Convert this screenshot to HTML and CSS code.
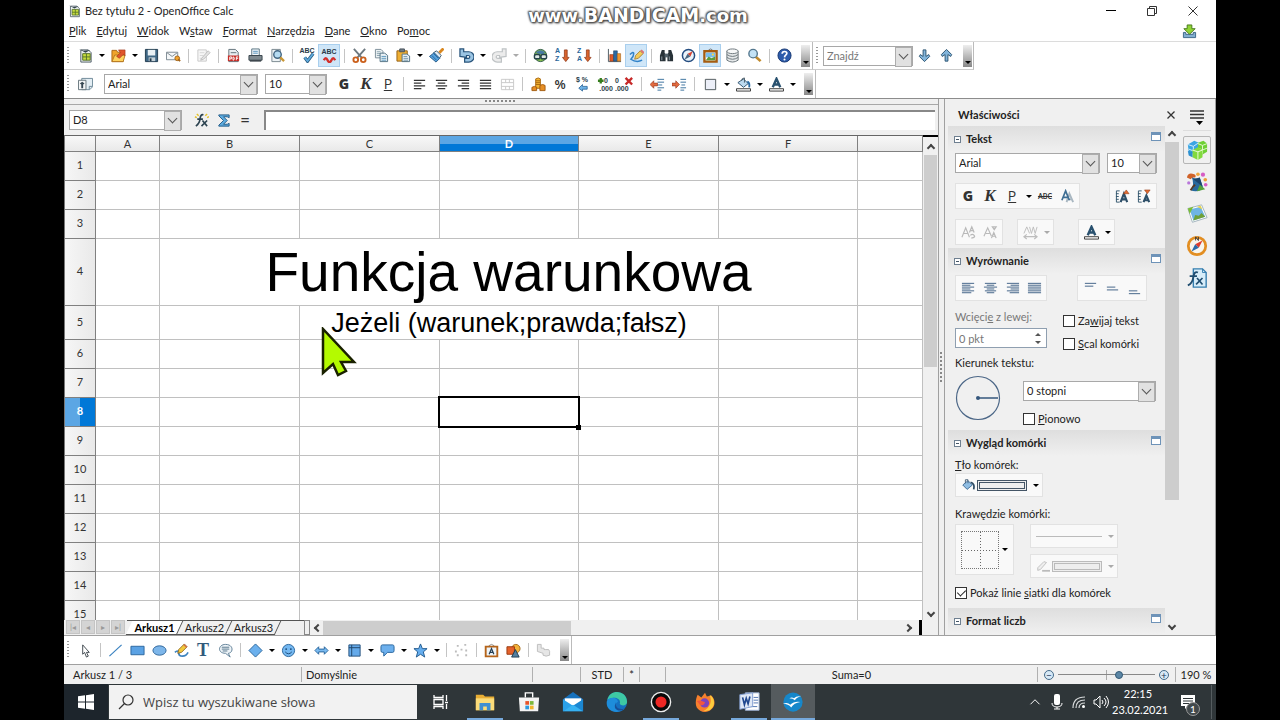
FILE: index.html
```
<!DOCTYPE html>
<html lang="pl">
<head>
    <meta charset="UTF-8">
    <meta name="viewport" content="width=device-width, initial-scale=1.0">
    <title>Bez tytułu 2 - OpenOffice Calc</title>
    <link rel="stylesheet" href="styles.css">
</head>
<body>
    <!-- Icon set -->
    <svg class="sprite" aria-hidden="true">
        <symbol id="i-new" viewBox="0 0 16 16"><path d="M3 2h8l3 3v10H3z" fill="#eef2f4" stroke="#4b5a63"/><path d="M1 1l5 2 7-1-5 3z" fill="#33434d"/><path d="M5 6h8v7H5z" fill="#c6dc3c" stroke="#54702a"/><path d="M5 9.500h8M9 6v7" stroke="#54702a"/></symbol>
        <symbol id="i-open" viewBox="0 0 16 16"><path d="M1 2.500h5l1 2h6v10H1z" fill="#f0a42c" stroke="#a8661a"/><path d="M1 14.500l3-7h11l-2 7z" fill="#ffd25e" stroke="#b57720"/><path d="M6 9l4-4-2-3h7v6l-2-1-4 4z" fill="#e0552a" stroke="#9c2f14" stroke-width=".6"/></symbol>
        <symbol id="i-save" viewBox="0 0 16 16"><path d="M1.500 1.500h13v13h-13z" fill="#3f6785" stroke="#1f3a4e"/><path d="M4 2h8v6H4z" fill="#e9f0f4"/><path d="M5 10h7v4H5z" fill="#c7d3da"/><path d="M6 11h2v3H6z" fill="#22384a"/></symbol>
        <symbol id="i-mail" viewBox="0 0 16 16"><path d="M.5 4.500h12v8H.5z" fill="#f5f7f8" stroke="#7b8890"/><path d="M1 5l5.500 4L12 5" fill="none" stroke="#7b8890"/><circle cx="12" cy="11" r="2.500" fill="#f2a32c" stroke="#a3651c"/><path d="M13 12l2 2" stroke="#a3651c" stroke-width="2"/></symbol>
        <symbol id="i-edit" viewBox="0 0 16 16"><path d="M2 2h9v12H2z" fill="#f6f6f6" stroke="#c9c9c9"/><path d="M4 5h5M4 8h4M4 11h3" stroke="#d6d6d6"/><path d="M6 11l7-8 2 2-7 7-3 1z" fill="#e4e4e4" stroke="#bdbdbd"/></symbol>
        <symbol id="i-pdf" viewBox="0 0 16 16"><path d="M3 1.500h7l3 3v10H3z" fill="#e9eff2" stroke="#5f7079"/><path d="M5 5h6" stroke="#5f7079"/><path d="M2 8h12v6H2z" fill="#c72d27"/><path d="M4 13V9.500h2v2H4M7.500 13V9.500c2 0 2 3.500 0 3.500M11 13V9.500h2M11 11h2" fill="none" stroke="#fff"/></symbol>
        <symbol id="i-print" viewBox="0 0 16 16"><path d="M4 1h8v7H4z" fill="#f3f8fb" stroke="#54707f"/><path d="M5.500 3.500h5M5.500 5.500h5" stroke="#4c8bb5"/><path d="M1 8h14v5H1z" fill="#7e898f" stroke="#36424a"/><path d="M2 13h12v1.500H2z" fill="#323c43"/></symbol>
        <symbol id="i-preview" viewBox="0 0 16 16"><path d="M2 1.500h9v13H2z" fill="#eef3f5" stroke="#77868e"/><circle cx="8" cy="7" r="4" fill="#b5dbf1" stroke="#426682" stroke-width="1.500"/><path d="M11 10l4 4" stroke="#c99735" stroke-width="2.500"/></symbol>
        <symbol id="i-check" viewBox="0 0 16 16"><path d="M5 10l3 4 6-8" fill="none" stroke="#24557b" stroke-width="3.500"/><path d="M5 10l3 4 6-8" fill="none" stroke="#60abdc" stroke-width="1.800"/></symbol>
        <symbol id="i-wave" viewBox="0 0 16 16"><path d="M2 13q2-4 4 0t4 0 4 0" fill="none" stroke="#d42e2a" stroke-width="2.600"/></symbol>
        <symbol id="i-cut" viewBox="0 0 16 16"><path d="M2 1l9 10M14 1L5 11" stroke="#6d7980" stroke-width="2"/><circle cx="4" cy="12.500" r="2.500" fill="none" stroke="#cb611d" stroke-width="2"/><circle cx="12" cy="12.500" r="2.500" fill="none" stroke="#cb611d" stroke-width="2"/></symbol>
        <symbol id="i-copy" viewBox="0 0 16 16"><path d="M1.500 1.500h6l2 2v7h-8z" fill="#eef3f5" stroke="#7a8c96"/><path d="M3 4h4M3 6h4M3 8h4" stroke="#8aa2ae"/><path d="M6.500 5.500h5l3 2.500v6.500h-8z" fill="#e9f1f5" stroke="#4f6f81"/><path d="M8 9h5M8 11h5M8 13h5" stroke="#5c97bd"/></symbol>
        <symbol id="i-paste" viewBox="0 0 16 16"><path d="M1 3h11v11H1z" fill="#efaf33" stroke="#946015"/><path d="M4 1h5v3H4z" fill="#707d86" stroke="#46525a"/><path d="M6.500 6.500h5l3 2v6h-8z" fill="#edf3f6" stroke="#4f6f81"/><path d="M8 9h4M8 11h5M8 13h5" stroke="#7093a7"/></symbol>
        <symbol id="i-brush" viewBox="0 0 16 16"><path d="M15.500.5L11 5" stroke="#d9871f" stroke-width="3"/><path d="M8 3l5 5-2 3-6-6z" fill="#e3ecf2" stroke="#37566e"/><path d="M5.500 5l6 6-4 4-7-6z" fill="#57a2dd" stroke="#245a88"/><path d="M3 8l5 5M5 6l5 5" stroke="#2b679b"/></symbol>
        <symbol id="i-undo" viewBox="0 0 16 16"><path d="M1 1h4v3h5.500a5 5 0 0 1 0 11H6v-4h4a1.500 1.500 0 0 0 0-3H8v2L1 9z" fill="#9ac4e3" stroke="#28547b" stroke-width="1.300"/></symbol>
        <symbol id="i-redo" viewBox="0 0 16 16"><path d="M15 1h-4v3H5.500a5 5 0 0 0 0 11H10v-4H6a1.500 1.500 0 0 1 0-3h2v2l7-1z" fill="#ececec" stroke="#bfc3c5" stroke-width="1.300"/></symbol>
        <symbol id="i-link" viewBox="0 0 16 16"><circle cx="8" cy="8" r="6.500" fill="#86bd4f" stroke="#2c5942"/><path d="M3 5q5-5 10 0l-3 2-4-1z" fill="#477aa3"/><rect x="1.500" y="7" width="6" height="4.500" rx="2" fill="#dfe9e7" stroke="#25434a" stroke-width="1.500"/><rect x="8.500" y="7" width="6" height="4.500" rx="2" fill="#dfe9e7" stroke="#25434a" stroke-width="1.500"/></symbol>
        <symbol id="i-down" viewBox="0 0 16 16"><path d="M10 2h3v8h2l-3.500 4.500L8 10h2z" fill="#d9642c" stroke="#8d3516" stroke-width=".8"/></symbol>
        <symbol id="i-chart" viewBox="0 0 16 16"><path d="M1.500 1v13.500H15" fill="none" stroke="#4c5960"/><path d="M3 7h4v7H3z" fill="#dc5a28" stroke="#8e3413" stroke-width=".6"/><path d="M7 3h4v11H7z" fill="#2c69a1" stroke="#1a4069" stroke-width=".6"/><path d="M11 6h3.500v8H11z" fill="#f0972f" stroke="#9b5a14" stroke-width=".6"/></symbol>
        <symbol id="i-draw" viewBox="0 0 16 16"><path d="M1 7q4-4 4-1t-3 6q6 4 12 1" fill="none" stroke="#3182c8" stroke-width="1.600"/><path d="M6 12l1-4 5-5 3 3-5 5z" fill="#f3cb59" stroke="#997025" stroke-width=".8"/><path d="M12 3l1.500-1.500 3 3L15 6z" fill="#dd7573"/></symbol>
        <symbol id="i-find" viewBox="0 0 16 16"><path d="M3 2h3v3l1 2v7H1V8zM10 2h3l2 6v6H9V7l1-2z" fill="#283238"/><path d="M6 6h4v4H6z" fill="#52616a"/><path d="M3 9v4M11 9v4" stroke="#91a1aa"/></symbol>
        <symbol id="i-nav" viewBox="0 0 16 16"><circle cx="8" cy="8" r="6.500" fill="#eaf4fb" stroke="#254d80" stroke-width="1.600"/><path d="M12.500 3.500L10 9 7 6z" fill="#d64332"/><path d="M3.500 12.500L7 6l3 3z" fill="#4a6780"/></symbol>
        <symbol id="i-gallery" viewBox="0 0 16 16"><path d="M6 2q2-2 4 0" fill="none" stroke="#777"/><path d="M1.500 3.500h13v11h-13z" fill="#fff" stroke="#a55c10" stroke-width="2.500"/><path d="M3 5h10v5H3z" fill="#78bdec"/><path d="M3 13l3-4 3 2 4-2v4z" fill="#5d9b3b"/><circle cx="10.500" cy="7" r="1.200" fill="#ffd93b"/></symbol>
        <symbol id="i-db" viewBox="0 0 16 16"><path d="M2 3v10q6 4 12 0V3" fill="#e5e8e9" stroke="#6a747a"/><ellipse cx="8" cy="3.500" rx="6" ry="2.500" fill="#f7f8f8" stroke="#6a747a"/><path d="M2 7q6 4 12 0M2 10q6 4 12 0" fill="none" stroke="#6a747a"/></symbol>
        <symbol id="i-zoom" viewBox="0 0 16 16"><path d="M9 9l5.500 5" stroke="#c18a2c" stroke-width="2.800"/><circle cx="6.500" cy="6" r="4.500" fill="#c3e2f5" stroke="#55788f" stroke-width="1.500"/></symbol>
        <symbol id="i-help" viewBox="0 0 16 16"><circle cx="8" cy="8" r="7" fill="#2d5cab" stroke="#183871"/><path d="M5.500 6.200q0-2.500 2.500-2.500t2.500 2q0 1-1.200 1.900T8 10" fill="none" stroke="#fff" stroke-width="1.800"/><circle cx="8" cy="12.300" r="1.100" fill="#fff"/></symbol>
        <symbol id="i-arrow-down" viewBox="0 0 16 16"><path d="M6.500 2h3v7l3-2 1 2L8 14.500 2.500 9l1-2 3 2z" fill="#83b5db" stroke="#29516f"/></symbol>
        <symbol id="i-arrow-up" viewBox="0 0 16 16"><path d="M6.500 14h3V7l3 2 1-2L8 1.500 2.500 7l1 2 3-2z" fill="#83b5db" stroke="#29516f"/></symbol>
        <symbol id="i-styles" viewBox="0 0 16 16"><path d="M4 1.500h11.500v9l-3 3H4z" fill="#e4eef4" stroke="#6d8797"/><path d="M12 13v-3h3" fill="none" stroke="#6d8797"/><path d="M.5 3.500h8v10h-8z" fill="#f3f5f6" stroke="#63727a"/><path d="M4.500 5l2.500 2-1.500 1v4h-2V8L2 7z" fill="#364752"/></symbol>
        <symbol id="i-left" viewBox="0 0 16 16"><path d="M2 3.500h12M2 6.500h8M2 9.500h12M2 12.500h8" stroke="currentColor" stroke-width="1.300"/></symbol>
        <symbol id="i-center" viewBox="0 0 16 16"><path d="M2 3.500h12M4 6.500h8M2 9.500h12M4 12.500h8" stroke="currentColor" stroke-width="1.300"/></symbol>
        <symbol id="i-right" viewBox="0 0 16 16"><path d="M2 3.500h12M6 6.500h8M2 9.500h12M6 12.500h8" stroke="currentColor" stroke-width="1.300"/></symbol>
        <symbol id="i-justify" viewBox="0 0 16 16"><path d="M2 3.500h12M2 6.500h12M2 9.500h12M2 12.500h12" stroke="currentColor" stroke-width="1.300"/></symbol>
        <symbol id="i-sleft" viewBox="0 0 16 16"><path d="M1 2.500h13M1 4.500h9M1 6.500h13M1 8.500h9M1 10.500h13M1 12.500h10" stroke="currentColor"/></symbol>
        <symbol id="i-scenter" viewBox="0 0 16 16"><path d="M2 2.500h12M4 4.500h8M1 6.500h14M4 8.500h8M2 10.500h12M4 12.500h8" stroke="currentColor"/></symbol>
        <symbol id="i-sright" viewBox="0 0 16 16"><path d="M2 2.500h13M6 4.500h9M2 6.500h13M6 8.500h9M2 10.500h13M5 12.500h10" stroke="currentColor"/></symbol>
        <symbol id="i-sjustify" viewBox="0 0 16 16"><path d="M1 2.500h14M1 4.500h14M1 6.500h14M1 8.500h14M1 10.500h14M1 12.500h14" stroke="currentColor"/></symbol>
        <symbol id="i-top" viewBox="0 0 16 16"><path d="M2 2.500h12M2 5.500h9" stroke="currentColor"/></symbol>
        <symbol id="i-middle" viewBox="0 0 16 16"><path d="M2 6.500h9M2 9.500h12" stroke="currentColor"/></symbol>
        <symbol id="i-bottom" viewBox="0 0 16 16"><path d="M2 10.500h9M2 13.500h12" stroke="currentColor"/></symbol>
        <symbol id="i-merge" viewBox="0 0 16 16"><path d="M1.500 2.500h13v11h-13zM1.500 6h13M1.500 10h13M6 2.500V6M10 2.500V6M6 10v3.500M10 10v3.500" fill="none" stroke="#c9c9c9"/></symbol>
        <symbol id="i-coins" viewBox="0 0 16 16"><path d="M5 2q3-2 5 0v10H5z" fill="#f4b431" stroke="#a96912"/><path d="M5 4h5M5 6h5M5 8h5" stroke="#a96912"/><path d="M1 11q3-2 5 0v3.500H1zM9.500 9q3-2 5.500 0v5.500H9.500z" fill="#e68f25" stroke="#a35b10"/></symbol>
        <symbol id="i-back" viewBox="0 0 16 16"><path d="M13 10H8V8l-4 4 4 3v-2h5z" fill="#6db2e6" stroke="#205c91" stroke-width=".8"/></symbol>
        <symbol id="i-plus" viewBox="0 0 16 16"><path d="M4 1v6M1 4h6" stroke="#357d1d" stroke-width="2.500"/></symbol>
        <symbol id="i-cross" viewBox="0 0 16 16"><path d="M7 1l7 7M14 1L7 8" stroke="#c62828" stroke-width="2.500"/></symbol>
        <symbol id="i-outdent" viewBox="0 0 16 16"><path d="M8 2.500h7M8 5.500h7M8 8.500h5M8 11.500h7M8 14h4" stroke="#356e9c"/><path d="M0 8l4-4v2.500h4v3H4V12z" fill="#e26b3f" stroke="#8c2f17" stroke-width=".6"/></symbol>
        <symbol id="i-indent" viewBox="0 0 16 16"><path d="M9 2.500h6M9 5.500h6M10 8.500h4M9 11.500h6M9 14h4" stroke="#356e9c"/><path d="M8 8L4 4v2.500H0v3h4V12z" fill="#e26b3f" stroke="#8c2f17" stroke-width=".6"/></symbol>
        <symbol id="i-border" viewBox="0 0 16 16"><path d="M2.500 2.500h11v11h-11z" fill="#eceff8" stroke="#4c5559"/></symbol>
        <symbol id="i-fill" viewBox="0 0 16 16"><path d="M2 6l6-4 5 5-5 4z" fill="#bcdaf0" stroke="#2f526e"/><path d="M6 4q0-3 3-3v5" fill="none" stroke="#4a5c68"/><path d="M12 5q3 1 2 6" fill="none" stroke="#2b6ca5" stroke-width="2"/><path d="M.5 12.500h15v2.500H.5z" fill="#fff" stroke="#333"/></symbol>
        <symbol id="i-fontcolor" viewBox="0 0 16 16"><path d="M4 11l4-9 4 9M6 8h4" fill="none" stroke="#29516f" stroke-width="2.600"/><path d="M.5 12.500h15v2.500H.5z" fill="#fff" stroke="#333"/></symbol>
        <symbol id="i-fx" viewBox="0 0 16 16"><path d="M3 1l2 2M1 4l2 1M12 3l2-2M14 5l2-1" stroke="#e4c22b" stroke-width="1.500"/><path d="M10 2Q7 1 6.500 6T2 14M3.500 6.500h6" fill="none" stroke="#2c4350" stroke-width="1.800"/><path d="M9 8l5 6M14 8l-6 6" stroke="#2c4350" stroke-width="1.700"/></symbol>
        <symbol id="i-sum" viewBox="0 0 16 16"><path d="M14 5V2H3v1l5 5-5 5v1h11v-3l-2 1H8l4-4-4-4h4z" fill="#5dace0" stroke="#235b86"/></symbol>
        <symbol id="i-update" viewBox="0 0 16 16"><path d="M1.500 9v5.500h13V9H12v2H4V9z" fill="#82afd0" stroke="#3b6587"/><path d="M5.500 1h5v4H14l-6 6-6-6h3.500z" fill="#8fd435" stroke="#46791a"/></symbol>

        <symbol id="i-pointer" viewBox="0 0 16 16"><path d="M5 2v10l2-2 2 5 2-1-2-4h3z" fill="#fff" stroke="#3f484e"/></symbol>
        <symbol id="i-line" viewBox="0 0 16 16"><path d="M1.500 14l13-12" stroke="#3a82c0" stroke-width="1.300"/></symbol>
        <symbol id="i-rect" viewBox="0 0 16 16"><path d="M1 3.500h14v9H1z" fill="#5ba2e4" stroke="#2a659e"/></symbol>
        <symbol id="i-ellipse" viewBox="0 0 16 16"><ellipse cx="8" cy="8" rx="7" ry="5" fill="#7db6ea" stroke="#2e659a"/></symbol>
        <symbol id="i-pencil" viewBox="0 0 16 16"><path d="M1 10q3-3 4 0 0 4 4 4t6-4" fill="none" stroke="#3d83bf" stroke-width="1.800"/><path d="M4 11l1-4 6-6 3 3-6 6z" fill="#f2c93c" stroke="#7c5614" stroke-width=".8"/><path d="M10 2l1-1 3 3-1 1z" fill="#d36a4e"/></symbol>
        <symbol id="i-note" viewBox="0 0 16 16"><path d="M8 1.500c9 0 8.500 9 3 9.500l2 4-5-4C-1 11 0 1.500 8 1.500z" fill="#eef4f8" stroke="#5f7f96"/><path d="M4 4.500h8M4 6.500h8M5 8.500h5" stroke="#54748b"/></symbol>
        <symbol id="i-diamond" viewBox="0 0 16 16"><path d="M8 1l7 7-7 7-7-7z" fill="#6bb0ed" stroke="#28649c"/></symbol>
        <symbol id="i-smile" viewBox="0 0 16 16"><circle cx="8" cy="8" r="6.500" fill="#74b8f1" stroke="#28649c"/><circle cx="5.500" cy="6.500" r="1" fill="#1d4b79"/><circle cx="10.500" cy="6.500" r="1" fill="#1d4b79"/><path d="M4.500 9.500q3.500 4 7 0" fill="none" stroke="#1d4b79"/></symbol>
        <symbol id="i-arrows" viewBox="0 0 16 16"><path d="M1 8l4-4v2.500h6V4l4 4-4 4V9.500H5V12z" fill="#79baf0" stroke="#28649c"/></symbol>
        <symbol id="i-flow" viewBox="0 0 16 16"><path d="M2 2h12v12H2z" fill="#65aaea" stroke="#28527e"/><path d="M5 2v12M2 5h12" stroke="#1f4369"/></symbol>
        <symbol id="i-balloon" viewBox="0 0 16 16"><path d="M2.500 2h11q1.500 0 1.500 2v4q0 2-1.500 2H8l-4 4v-4H2.500Q1 10 1 8V4q0-2 1.500-2z" fill="#6db0ed" stroke="#28649c"/></symbol>
        <symbol id="i-star" viewBox="0 0 16 16"><path d="M8 1l2 5h5l-4 3.500 1.500 5.500L8 12l-4.500 3L5 9.500 1 6h5z" fill="#66aeef" stroke="#1f578c"/></symbol>
        <symbol id="i-points" viewBox="0 0 16 16"><path d="M3 3h2M11 2h2M7 7h2M12 8h2M1 9h2M3 13h2M12 13h2" stroke="#bcbcbc" stroke-width="2"/></symbol>
        <symbol id="i-fontwork" viewBox="0 0 16 16"><path d="M5 3q3-3 6 0" fill="none" stroke="#888"/><path d="M1.800 3.800h12.400v10.400H1.800z" fill="#eef4f8" stroke="#b5641a" stroke-width="2"/><path d="M5.500 12L8 6l2.500 6M6.500 10h3" fill="none" stroke="#223e55" stroke-width="1.300"/></symbol>
        <symbol id="i-shapes" viewBox="0 0 16 16"><circle cx="10.500" cy="6" r="4.500" fill="#f2b23a" stroke="#a66b16"/><path d="M1 4h8v8H1z" fill="#e5622b" stroke="#96390f"/><path d="M10 7l4 8H6z" fill="#55809f" stroke="#1f3b50"/></symbol>
        <symbol id="i-extrude" viewBox="0 0 16 16"><path d="M1.500 1.500h4v4h3V7h2q4-1 4 2v4q-4 2-7 0v-2l-6-2z" fill="#e6e6e6" stroke="#bdbdbd"/></symbol>

        <symbol id="i-shadow" viewBox="0 0 16 16"><path d="M7 14l3-9 4 9M8 11h5" fill="none" stroke="#a9b7c1" stroke-width="2"/><path d="M2 12l4-10 4 10M3 9h5" fill="none" stroke="#3f6f94" stroke-width="1.800"/></symbol>
        <symbol id="i-grow" viewBox="0 0 16 16"><path d="M5 2H1.500v12H5M1 5h3M1 8h3M1 11h3" fill="none" stroke="#33566e"/><path d="M6 14l3.500-9L13 14M7 11h5" fill="none" stroke="#2e4f68" stroke-width="2.300"/><path d="M9 5l3-4 3 4z" fill="#e36c32" stroke="#933b16" stroke-width=".6"/></symbol>
        <symbol id="i-shrink" viewBox="0 0 16 16"><path d="M5 2H1.500v12H5M1 5h3M1 8h3M1 11h3" fill="none" stroke="#33566e"/><path d="M7 14l3-7 3 7M8 12h4" fill="none" stroke="#2e4f68" stroke-width="2.300"/><path d="M8 1h6l-3 4z" fill="#e36c32" stroke="#933b16" stroke-width=".6"/></symbol>
        <symbol id="i-super" viewBox="0 0 16 16"><path d="M1 13L5 3l4 10M3 9h4" fill="none" stroke="#b9b9b9" stroke-width="1.200"/><path d="M9 8l2.500-6L14 8M10 6h3M10 11q2-2 4 0t-3 3" fill="none" stroke="#b9b9b9" stroke-width="1.300"/></symbol>
        <symbol id="i-sub" viewBox="0 0 16 16"><path d="M1 12L5 3l4 9M3 9h4" fill="none" stroke="#b9b9b9" stroke-width="1.200"/><path d="M9 14l2.500-6 2.500 6M10 12h3M10 2h4l-2 3z" fill="none" stroke="#b9b9b9" stroke-width="1.300"/></symbol>
        <symbol id="i-spacing" viewBox="0 0 16 16"><path d="M1 9l3-7 3 7M7 2l2 7 2-7 2 7 2-7" fill="none" stroke="#bdbdbd"/><path d="M2 12.500h12M4 10l-3 2.500L4 15M12 10l3 2.500-3 2.500" fill="none" stroke="#bdbdbd" stroke-width="1.300"/></symbol>
        <symbol id="i-bucket" viewBox="0 0 16 16"><path d="M2 8l6-5 5 5-6 5z" fill="#8fbde3" stroke="#3a6690"/><path d="M5 6V2h3v4" fill="none" stroke="#3d5870"/><path d="M11 5q5 1 3.500 8" fill="none" stroke="#2c4a63" stroke-width="2"/></symbol>
        <symbol id="i-pen" viewBox="0 0 16 16"><path d="M2 10l7-7 3 1-7 8-3 1z" fill="#eee" stroke="#bbb"/><path d="M7 13.500h9" stroke="#bbb" stroke-width="2"/></symbol>

        <symbol id="i-cubes" viewBox="0 0 24 24"><path d="M2 6l7-4 5 2v9l-4 4-7-3z" fill="#3aa5e3"/><path d="M2 6l6 2 6-4M8 8v8M3 11l5 2" fill="none" stroke="#d9f0fc"/><path d="M13 4l6-2 4 3v9l-5 3-5-2z" fill="#6fd035"/><path d="M13 5l5 2 5-2M18 7v9M13 10l5 2 5-2" fill="none" stroke="#e8fbd7"/><path d="M7 12l6-3 5 3v8l-5 3-6-3z" fill="#82d93e"/><path d="M7 12l6 2 5-2M13 14v9" fill="none" stroke="#f1ffe4"/><path d="M2 13l5 1v6l-4-2z" fill="#2b8fd0"/></symbol>
        <symbol id="i-stylist" viewBox="0 0 24 24"><path d="M6 6q4 4 9 1l4 12q-7 5-14 2 5-6 1-15z" fill="#27699d"/><path d="M8 9l7-2 3 10z" fill="#1d466c"/><path d="M15 15l6 5-9 2z" fill="#55a53a"/><path d="M5 21q2-4 5-6" fill="none" stroke="#5a3920" stroke-width="2"/><path d="M1 7q1-5 6-4t3 4H7l-2 2z" fill="#d0632a"/><circle cx="13" cy="3.500" r="2" fill="#f2a83e"/><circle cx="18.500" cy="4" r="2.300" fill="#d65cc4"/><circle cx="21" cy="9.500" r="2" fill="#ef9d37"/><circle cx="21.500" cy="15" r="2" fill="#d65cc4"/><circle cx="3" cy="13" r="1.800" fill="#b977da"/></symbol>
        <symbol id="i-image" viewBox="0 0 24 24"><path d="M2 6l15-4 6 14-16 5z" fill="#fff" stroke="#9db0ba"/><path d="M4 7l12-3 5 11-13 4z" fill="#6eb4e3"/><path d="M2 6l6-2-4 8z" fill="#7bbd35"/><path d="M8 19l2-6 4 1 3-3 4 4z" fill="#6fa138"/><path d="M16 3l2 4-6-3z" fill="#e9d44a"/></symbol>
        <symbol id="i-compass" viewBox="0 0 24 24"><circle cx="12" cy="12" r="9.500" fill="#f8f5ed" stroke="#e28e22" stroke-width="3"/><path d="M18 6l-4 8-4-4z" fill="#dd3d2e"/><path d="M6 18l4-8 4 4z" fill="#2c6aa8"/><path d="M10.500 6V2l3 4V2" fill="none" stroke="#333"/></symbol>
        <symbol id="i-function" viewBox="0 0 24 24"><path d="M8 2h10l4 4v16H8z" fill="#d7edf9" stroke="#357eaf" stroke-width="1.500"/><path d="M18 2v4h4" fill="none" stroke="#357eaf"/><path d="M13 6q-4-2-5 5T2 20M4 10h8" fill="none" stroke="#1f4d70" stroke-width="2"/><path d="M12 12l6 7M18 12l-7 7" stroke="#1f4d70" stroke-width="1.800"/></symbol>

        <symbol id="i-windows" viewBox="0 0 16 16"><path d="M0 2.300l7-1v6.200H0zM8 1.200L16 0v7.500H8zM0 8.500h7v6.200l-7-1zM8 8.500h8V16l-8-1.200z" fill="#fff"/></symbol>
        <symbol id="i-search" viewBox="0 0 16 16"><circle cx="10" cy="6" r="5" fill="none" stroke="#333" stroke-width="1.200"/><path d="M6.500 9.500L1 15" stroke="#333" stroke-width="1.200"/></symbol>
        <symbol id="i-tasks" viewBox="0 0 16 16"><path d="M1 1v2.500h9V1M1 15v-2.500h9V15M1 5.500h9v5H1zM13.500 1v6M13.500 10v5M12 8.500h3" fill="none" stroke="#fff" stroke-width="1.300"/></symbol>
        <symbol id="i-folder" viewBox="0 0 24 24"><path d="M2 4h8l2 2h10v15H2z" fill="#e9ae34"/><path d="M2 8h20v13H2z" fill="#fbdc7a"/><path d="M6 21v-8h12v8h-4v-4h-4v4z" fill="#3f8fd2"/></symbol>
        <symbol id="i-store" viewBox="0 0 24 24"><path d="M8 7V2h8v5" fill="none" stroke="#fff" stroke-width="1.500"/><path d="M1 7h22l-1 15H2z" fill="#f4f4f4"/><path d="M8 11h4v4H8z" fill="#e8552b"/><path d="M13 11h4v4h-4z" fill="#7cb83a"/><path d="M8 16h4v4H8z" fill="#2d9be2"/><path d="M13 16h4v4h-4z" fill="#f2b62b"/></symbol>
        <symbol id="i-post" viewBox="0 0 24 24"><path d="M1 9l11-8 11 8v13H1z" fill="#1671bd"/><path d="M3 8h18v8H3z" fill="#fff"/><path d="M1 9l11 7-11 6z" fill="#2ba1e9"/><path d="M23 9l-11 7 11 6z" fill="#1b87d2"/><path d="M1 22l11-7 11 7z" fill="#37b2f2"/></symbol>
        <symbol id="i-edge" viewBox="0 0 24 24"><circle cx="12" cy="12" r="11" fill="#1570c0"/><path d="M1.500 10C4-3 23-1 23 12c0 4-6 5-8 2 2-6-7-9-13.500-4z" fill="#3ec8a4"/><path d="M1 11c4-6 12-4 12 1-5 2-2 10 5 9C9 26-1 20 1 11z" fill="#1e8ddb"/><path d="M11 12c-2 6 4 9 9 7-4 5-14 2-9-7z" fill="#184f98"/></symbol>
        <symbol id="i-record" viewBox="0 0 24 24"><circle cx="12" cy="12" r="10.500" fill="#090909" stroke="#eee" stroke-width="1.500"/><circle cx="12" cy="12" r="6" fill="#ee2724"/></symbol>
        <symbol id="i-firefox" viewBox="0 0 24 24"><path d="M4 4l4 3 4-5 2 4 5-1c5 5 4 12 0 15-5 5-13 3-16-2-2-4-1-10 1-14z" fill="#f7802d"/><path d="M17 4c7 5 6 13 0 17l-7 1c8-4 10-11 7-18z" fill="#fdcc3d"/><circle cx="11.500" cy="13" r="5" fill="#7b45bc"/><path d="M3 11c5-2 6 1 9 1-1 5-6 4-7 1z" fill="#f1573f"/></symbol>
        <symbol id="i-word" viewBox="0 0 24 24"><path d="M8 2h15v19H8z" fill="#fff" stroke="#9eb4d8"/><path d="M17 7h5M17 10h5M17 13h5M12 17h9" stroke="#486fae"/><path d="M2 4l14-2v15l-14 3z" fill="#dfe8f6" stroke="#7f9bd0"/><path d="M5 7l2 8 2-7 2 6 2-8" fill="none" stroke="#21488f" stroke-width="1.800"/></symbol>
        <symbol id="i-office" viewBox="0 0 24 24"><circle cx="12" cy="12" r="10.500" fill="#1687ca"/><path d="M8 8q3-2 5 0 3-3 8-2-4 0-7 4-2-2-6-2zM1 14q5-2 8 1 4-4 11-3-7 1-10 6-3-4-9-4z" fill="#fff"/></symbol>
        <symbol id="i-up" viewBox="0 0 16 16"><path d="M2 11l6-6 6 6" fill="none" stroke="#fff" stroke-width="1.300"/></symbol>
        <symbol id="i-mic" viewBox="0 0 16 16"><rect x="5" y="0" width="6" height="11" rx="2" fill="#fff"/><path d="M3 9q0 4 5 4t5-4M8 13v2M5 15h6" fill="none" stroke="#fff"/></symbol>
        <symbol id="i-wifi" viewBox="0 0 16 16"><path d="M2 14Q2 3 14 3M5 14q0-8 9-8M8 14q0-5 6-5" fill="none" stroke="#d7dadb" stroke-width="1.200"/><circle cx="12.500" cy="12.500" r="1.500" fill="#fff"/></symbol>
        <symbol id="i-sound" viewBox="0 0 16 16"><path d="M1 6h2l4-4v12l-4-4H1z" fill="none" stroke="#fff"/><path d="M9 6q2 2 0 4M11 4q4 4 0 8M13 2q5 6 0 12" fill="none" stroke="#fff"/></symbol>
        <symbol id="i-message" viewBox="0 0 16 16"><path d="M1 1h14v11H8l-3 3v-3H1z" fill="#fff"/><path d="M3 4.500h10M3 7h10M3 9.500h6" stroke="#2d3437"/></symbol>
    </svg>

    <div class="desktop">
        <header class="titlebar">
            <svg class="app-icon"><use href="#i-new"/></svg>
            <span class="title">Bez tytułu 2 - OpenOffice Calc</span>
            <div class="watermark"><small>www.</small>BANDICAM<small>.com</small></div>
            <div class="window-buttons">
                <button title="Minimalizuj"><svg viewBox="0 0 10 10"><path d="M0 4.500h10" stroke="#000"/></svg></button>
                <button title="Przywróć"><svg viewBox="0 0 10 10"><path d="M.5 2.500h7v7h-7zM2.500 2V.5h7v7H8" fill="none" stroke="#333"/></svg></button>
                <button title="Zamknij"><svg viewBox="0 0 10 10"><path d="M.5.5l9 9M9.500.5l-9 9" stroke="#333"/></svg></button>
            </div>
        </header>

        <nav class="menubar">
            <a href="#"><u>P</u>lik</a>
            <a href="#"><u>E</u>dytuj</a>
            <a href="#"><u>W</u>idok</a>
            <a href="#">W<u>s</u>taw</a>
            <a href="#"><u>F</u>ormat</a>
            <a href="#"><u>N</u>arzędzia</a>
            <a href="#"><u>D</u>ane</a>
            <a href="#"><u>O</u>kno</a>
            <a href="#">Po<u>m</u>oc</a>
            <button class="tool update" title="Aktualizacje"><svg><use href="#i-update"/></svg></button>
        </nav>

        <div class="toolbar-row">
            <div class="toolbar">
                <i class="grip"></i>
                <button class="tool" title="Nowy"><svg><use href="#i-new"/></svg></button><button class="caret" title="Nowy: lista"></button>
                <button class="tool" title="Otwórz"><svg><use href="#i-open"/></svg></button><button class="caret" title="Otwórz: lista"></button>
                <button class="tool" title="Zapisz"><svg><use href="#i-save"/></svg></button>
                <button class="tool" title="Wyślij pocztą"><svg><use href="#i-mail"/></svg></button>
                <i class="sep"></i>
                <button class="tool" title="Edytuj plik" disabled><svg><use href="#i-edit"/></svg></button>
                <i class="sep"></i>
                <button class="tool" title="Eksportuj jako PDF"><svg><use href="#i-pdf"/></svg></button>
                <button class="tool" title="Drukuj"><svg><use href="#i-print"/></svg></button>
                <button class="tool" title="Podgląd strony"><svg><use href="#i-preview"/></svg></button>
                <i class="sep"></i>
                <button class="tool" title="Pisownia"><svg><use href="#i-check"/></svg><b class="mark">ABC</b></button>
                <button class="tool on" title="Autosprawdzanie pisowni"><svg><use href="#i-wave"/></svg><b class="mark">ABC</b></button>
                <i class="sep"></i>
                <button class="tool" title="Wytnij"><svg><use href="#i-cut"/></svg></button>
                <button class="tool" title="Kopiuj"><svg><use href="#i-copy"/></svg></button>
                <button class="tool" title="Wklej"><svg><use href="#i-paste"/></svg></button><button class="caret" title="Wklej: lista"></button>
                <button class="tool" title="Pędzel formatów"><svg><use href="#i-brush"/></svg></button>
                <i class="sep"></i>
                <button class="tool" title="Cofnij"><svg><use href="#i-undo"/></svg></button><button class="caret" title="Cofnij: lista"></button>
                <button class="tool" title="Przywróć" disabled><svg><use href="#i-redo"/></svg></button><button class="caret" title="Przywróć: lista" disabled></button>
                <i class="sep"></i>
                <button class="tool" title="Hiperłącze"><svg><use href="#i-link"/></svg></button>
                <button class="tool" title="Sortuj rosnąco"><svg><use href="#i-down"/></svg><b class="mark sort">A<br>Z</b></button>
                <button class="tool" title="Sortuj malejąco"><svg><use href="#i-down"/></svg><b class="mark sort">Z<br>A</b></button>
                <i class="sep"></i>
                <button class="tool" title="Wykres"><svg><use href="#i-chart"/></svg></button>
                <button class="tool on" title="Funkcje rysunkowe"><svg><use href="#i-draw"/></svg></button>
                <i class="sep"></i>
                <button class="tool" title="Znajdź i zamień"><svg><use href="#i-find"/></svg></button>
                <button class="tool" title="Nawigator"><svg><use href="#i-nav"/></svg></button>
                <button class="tool on" title="Galeria"><svg><use href="#i-gallery"/></svg></button>
                <button class="tool" title="Źródła danych"><svg><use href="#i-db"/></svg></button>
                <button class="tool" title="Powiększenie"><svg><use href="#i-zoom"/></svg></button>
                <i class="sep"></i>
                <button class="tool" title="Pomoc"><svg><use href="#i-help"/></svg></button>
                <button class="more" title="Więcej"></button>
            </div>
            <div class="toolbar boxed">
                <i class="grip"></i>
                <span class="combo find muted"><select aria-label="Znajdź"><option>Znajdź</option></select></span>
                <button class="tool" title="Znajdź następny"><svg><use href="#i-arrow-down"/></svg></button>
                <button class="tool" title="Znajdź poprzedni"><svg><use href="#i-arrow-up"/></svg></button>
                <button class="more" title="Więcej"></button>
            </div>
        </div>

        <div class="toolbar-row">
            <div class="toolbar format">
                <i class="grip"></i>
                <button class="tool" title="Style"><svg><use href="#i-styles"/></svg></button>
                <span class="combo font"><select aria-label="Czcionka"><option>Arial</option></select></span>
                <span class="combo size"><select aria-label="Rozmiar"><option>10</option></select></span>
                <button class="tool bold" title="Pogrubienie">G</button>
                <button class="tool italic" title="Kursywa">K</button>
                <button class="tool under" title="Podkreślenie">P</button>
                <i class="sep"></i>
                <button class="tool" title="Do lewej"><svg><use href="#i-left"/></svg></button>
                <button class="tool" title="Do środka"><svg><use href="#i-center"/></svg></button>
                <button class="tool" title="Do prawej"><svg><use href="#i-right"/></svg></button>
                <button class="tool" title="Wyjustuj"><svg><use href="#i-justify"/></svg></button>
                <button class="tool" title="Scal komórki" disabled><svg><use href="#i-merge"/></svg></button>
                <i class="sep"></i>
                <button class="tool" title="Waluta"><svg><use href="#i-coins"/></svg></button>
                <button class="tool percent" title="Procent">%</button>
                <button class="tool" title="Format standardowy"><svg><use href="#i-back"/></svg><b class="mark">$ %</b></button>
                <button class="tool" title="Dodaj miejsce dziesiętne"><svg><use href="#i-plus"/></svg><b class="mark num">0<br>.000</b></button>
                <button class="tool" title="Usuń miejsce dziesiętne"><svg><use href="#i-cross"/></svg><b class="mark num less">0<br>.000</b></button>
                <i class="sep"></i>
                <button class="tool" title="Zmniejsz wcięcie"><svg><use href="#i-outdent"/></svg></button>
                <button class="tool" title="Zwiększ wcięcie"><svg><use href="#i-indent"/></svg></button>
                <i class="sep"></i>
                <button class="tool" title="Krawędzie"><svg><use href="#i-border"/></svg></button><button class="caret" title="Krawędzie: lista"></button>
                <button class="tool" title="Kolor tła"><svg><use href="#i-fill"/></svg></button><button class="caret" title="Kolor tła: lista"></button>
                <button class="tool" title="Kolor czcionki"><svg><use href="#i-fontcolor"/></svg></button><button class="caret" title="Kolor czcionki: lista"></button>
                <button class="more" title="Więcej"></button>
            </div>
        </div>

        <main class="workspace">
            <section class="document">
                <div class="strip"><i></i></div>
                <div class="formula">
                    <span class="combo name"><select aria-label="Pole nazwy"><option>D8</option></select></span>
                    <button class="tool" title="Kreator funkcji"><svg><use href="#i-fx"/></svg></button>
                    <button class="tool" title="Suma"><svg><use href="#i-sum"/></svg></button>
                    <button class="tool equals" title="Funkcja">=</button>
                    <input type="text" aria-label="Wiersz wprowadzania">
                </div>
                <div class="sheet-area">
                    <div class="sheet-clip">
                        <table class="sheet">
                            <colgroup><col class="c-head"><col class="c-a"><col class="c-wide"><col class="c-wide"><col class="c-n"><col class="c-wide"><col class="c-n"><col></colgroup>
                            <thead><tr><th></th><th>A</th><th>B</th><th>C</th><th class="current">D</th><th>E</th><th>F</th><th></th></tr></thead>
                            <tbody>
                                <tr><th>1</th><td></td><td></td><td></td><td></td><td></td><td></td><td></td></tr>
                                <tr><th>2</th><td></td><td></td><td></td><td></td><td></td><td></td><td></td></tr>
                                <tr><th>3</th><td></td><td></td><td></td><td></td><td></td><td></td><td></td></tr>
                                <tr class="big"><th>4</th><td></td><td colspan="5">Funkcja warunkowa</td><td></td></tr>
                                <tr class="mid"><th>5</th><td></td><td></td><td colspan="3">Jeżeli (warunek;prawda;fałsz)</td><td></td><td></td></tr>
                                <tr><th>6</th><td></td><td></td><td></td><td></td><td></td><td></td><td></td></tr>
                                <tr><th>7</th><td></td><td></td><td></td><td></td><td></td><td></td><td></td></tr>
                                <tr><th class="current">8</th><td></td><td></td><td></td><td class="selected"></td><td></td><td></td><td></td></tr>
                                <tr><th>9</th><td></td><td></td><td></td><td></td><td></td><td></td><td></td></tr>
                                <tr><th>10</th><td></td><td></td><td></td><td></td><td></td><td></td><td></td></tr>
                                <tr><th>11</th><td></td><td></td><td></td><td></td><td></td><td></td><td></td></tr>
                                <tr><th>12</th><td></td><td></td><td></td><td></td><td></td><td></td><td></td></tr>
                                <tr><th>13</th><td></td><td></td><td></td><td></td><td></td><td></td><td></td></tr>
                                <tr><th>14</th><td></td><td></td><td></td><td></td><td></td><td></td><td></td></tr>
                                <tr><th>15</th><td></td><td></td><td></td><td></td><td></td><td></td><td></td></tr>
                            </tbody>
                        </table>
                        <svg class="pointer" viewBox="0 0 36 52"><path d="M2 2v44l10-9 5 11 8-4-5-9h13z" fill="#b4fa00" stroke="#1a2100" stroke-width="2.500"/></svg>
                    </div>
                    <div class="scroll main-scroll"><i class="chev up"></i><div class="track"><div class="thumb"></div></div><i class="chev down"></i></div>
                </div>
                <div class="tabs">
                    <div class="tab-nav"><button title="Pierwszy">|◂</button><button title="Poprzedni">◂</button><button title="Następny">▸</button><button title="Ostatni">▸|</button></div>
                    <div class="tab-list"><button class="tab active">Arkusz1</button><button class="tab">Arkusz2</button><button class="tab">Arkusz3</button></div>
                    <i class="splitter"></i>
                    <div class="hscroll"><i class="chev left"></i><div class="htrack"><div class="hthumb"></div></div><i class="chev right"></i></div>
                </div>
            </section>

            <div class="divider"><i></i></div>

            <aside class="sidebar">
                <div class="panel">
                    <h2>Właściwości <button class="close" title="Zamknij"><svg viewBox="0 0 8 8"><path d="M.5.5l7 7M7.500.5l-7 7" stroke="#333" stroke-width="1.300"/></svg></button></h2>
                    <div class="panel-body">
                        <div class="sections">
                            <h3><i class="minus"></i>Tekst<button class="dialog" title="Więcej opcji"></button></h3>
                            <div class="section text-section">
                                <div class="row">
                                    <span class="combo sfont"><select aria-label="Nazwa czcionki"><option>Arial</option></select></span>
                                    <span class="combo ssize"><select aria-label="Rozmiar czcionki"><option>10</option></select></span>
                                </div>
                                <div class="row">
                                    <div class="group">
                                        <button class="tool bold" title="Pogrubienie">G</button><button class="tool italic" title="Kursywa">K</button><button class="tool under" title="Podkreślenie">P</button><button class="caret" title="Podkreślenie: lista"></button><button class="tool strike" title="Przekreślenie">ABC</button><button class="tool" title="Cień"><svg><use href="#i-shadow"/></svg></button>
                                    </div>
                                    <div class="group"><button class="tool" title="Zwiększ czcionkę"><svg><use href="#i-grow"/></svg></button><button class="tool" title="Zmniejsz czcionkę"><svg><use href="#i-shrink"/></svg></button></div>
                                </div>
                                <div class="row gap-small">
                                    <div class="group"><button class="tool" title="Indeks górny" disabled><svg><use href="#i-super"/></svg></button><button class="tool" title="Indeks dolny" disabled><svg><use href="#i-sub"/></svg></button></div>
                                    <div class="group"><button class="tool" title="Odstępy" disabled><svg><use href="#i-spacing"/></svg></button><button class="caret" title="Odstępy: lista" disabled></button></div>
                                    <div class="group push"><button class="tool" title="Kolor czcionki"><svg><use href="#i-fontcolor"/></svg></button><button class="caret" title="Kolor czcionki: lista"></button></div>
                                </div>
                            </div>

                            <h3><i class="minus"></i>Wyrównanie<button class="dialog" title="Więcej opcji"></button></h3>
                            <div class="section align-section">
                                <div class="row">
                                    <div class="group blue"><button class="tool" title="Do lewej"><svg><use href="#i-sleft"/></svg></button><button class="tool" title="Do środka"><svg><use href="#i-scenter"/></svg></button><button class="tool" title="Do prawej"><svg><use href="#i-sright"/></svg></button><button class="tool" title="Wyjustuj"><svg><use href="#i-sjustify"/></svg></button></div>
                                    <div class="group blue"><button class="tool" title="Do góry"><svg><use href="#i-top"/></svg></button><button class="tool" title="Na środku"><svg><use href="#i-middle"/></svg></button><button class="tool" title="Do dołu"><svg><use href="#i-bottom"/></svg></button></div>
                                </div>
                                <div class="two">
                                    <div class="indent">
                                        <label for="indent">Wcięci<u>e</u> z lewej:</label>
                                        <span class="spin"><input id="indent" type="text" value="0 pkt" disabled></span>
                                    </div>
                                    <div class="checks">
                                        <label><input type="checkbox"> <span>Za<u>w</u>ijaj tekst</span></label>
                                        <label><input type="checkbox"> <span><u>S</u>cal komórki</span></label>
                                    </div>
                                </div>
                                <label class="line" for="angle">Kierunek tekstu:</label>
                                <div class="direction">
                                    <svg class="dial" viewBox="0 0 46 46"><circle cx="23" cy="23" r="21.500" fill="none" stroke="#4c6787" stroke-width="1.200"/><path d="M23 23h20" stroke="#35577c" stroke-width="1.500"/><circle cx="23" cy="23" r="2" fill="#35577c"/></svg>
                                    <div class="angle">
                                        <span class="combo"><select id="angle"><option>0 stopni</option></select></span>
                                        <label><input type="checkbox"> <span><u>P</u>ionowo</span></label>
                                    </div>
                                </div>
                            </div>

                            <h3><i class="minus"></i>Wygląd komórki<button class="dialog" title="Więcej opcji"></button></h3>
                            <div class="section look-section">
                                <span class="line"><u>T</u>ło komórek:</span>
                                <div class="group picker"><button title="Tło komórek"><svg><use href="#i-bucket"/></svg><i class="swatch dark"></i></button><button class="caret" title="Tło: lista"></button></div>
                                <span class="line borders-label">Krawędzie komórki:</span>
                                <div class="borders">
                                    <div class="group border-box"><button title="Krawędzie"><i class="dots"></i></button><button class="caret" title="Krawędzie: lista"></button></div>
                                    <div class="stack">
                                        <div class="group picker"><button title="Styl linii" disabled><i class="rule"></i></button><button class="caret" title="Styl: lista" disabled></button></div>
                                        <div class="group picker"><button title="Kolor linii" disabled><svg><use href="#i-pen"/></svg><i class="swatch"></i></button><button class="caret" title="Kolor: lista" disabled></button></div>
                                    </div>
                                </div>
                                <label class="gridlines"><input type="checkbox" checked> <span>Pokaż linie <u>s</u>iatki dla komórek</span></label>
                            </div>

                            <h3><i class="minus"></i>Format liczb<button class="dialog" title="Więcej opcji"></button></h3>
                        </div>
                        <div class="scroll side"><i class="chev up"></i><div class="track"><div class="thumb"></div></div><i class="chev down"></i></div>
                    </div>
                </div>
                <div class="deck">
                    <button class="burger" title="Ustawienia panelu"><svg viewBox="0 0 16 16"><path d="M1 2h14M1 5.500h14M1 9h14" stroke="#333" stroke-width="1.300"/><path d="M7 12h7l-3.500 4z"/></svg></button>
                    <button class="on" title="Właściwości"><svg><use href="#i-cubes"/></svg></button>
                    <button title="Style"><svg><use href="#i-stylist"/></svg></button>
                    <button title="Galeria"><svg><use href="#i-image"/></svg></button>
                    <button title="Nawigator"><svg><use href="#i-compass"/></svg></button>
                    <button title="Funkcje"><svg><use href="#i-function"/></svg></button>
                </div>
            </aside>
        </main>

        <div class="toolbar-row drawing">
            <div class="toolbar">
                <i class="grip"></i>
                <button class="tool" title="Wybierz"><svg><use href="#i-pointer"/></svg></button>
                <i class="sep"></i>
                <button class="tool" title="Linia"><svg><use href="#i-line"/></svg></button>
                <button class="tool" title="Prostokąt"><svg><use href="#i-rect"/></svg></button>
                <button class="tool" title="Elipsa"><svg><use href="#i-ellipse"/></svg></button>
                <button class="tool" title="Linia odręczna"><svg><use href="#i-pencil"/></svg></button>
                <button class="tool text" title="Tekst">T</button>
                <button class="tool" title="Objaśnienie"><svg><use href="#i-note"/></svg></button>
                <i class="sep"></i>
                <button class="tool" title="Kształty podstawowe"><svg><use href="#i-diamond"/></svg></button><button class="caret" title="Kształty: lista"></button>
                <button class="tool" title="Symbole"><svg><use href="#i-smile"/></svg></button><button class="caret" title="Symbole: lista"></button>
                <button class="tool" title="Strzałki"><svg><use href="#i-arrows"/></svg></button><button class="caret" title="Strzałki: lista"></button>
                <button class="tool" title="Schematy blokowe"><svg><use href="#i-flow"/></svg></button><button class="caret" title="Schematy: lista"></button>
                <button class="tool" title="Objaśnienia"><svg><use href="#i-balloon"/></svg></button><button class="caret" title="Objaśnienia: lista"></button>
                <button class="tool" title="Gwiazdy"><svg><use href="#i-star"/></svg></button><button class="caret" title="Gwiazdy: lista"></button>
                <i class="sep"></i>
                <button class="tool" title="Punkty" disabled><svg><use href="#i-points"/></svg></button>
                <i class="sep"></i>
                <button class="tool" title="Fontwork"><svg><use href="#i-fontwork"/></svg></button>
                <button class="tool" title="Z pliku"><svg><use href="#i-shapes"/></svg></button>
                <i class="sep"></i>
                <button class="tool" title="Efekty 3D" disabled><svg><use href="#i-extrude"/></svg></button>
                <button class="more" title="Więcej"></button>
            </div>
        </div>

        <footer class="statusbar">
            <span class="s-sheet">Arkusz 1 / 3</span>
            <span class="s-style">Domyślnie</span>
            <span class="s-empty"></span>
            <span class="s-mode">STD</span>
            <span class="s-mod">*</span>
            <span class="s-sign"></span>
            <span class="s-sum">Suma=0</span>
            <span class="s-zoom"><button title="Pomniejsz">−</button><input type="range" min="0" max="100" value="64" aria-label="Powiększenie"><button title="Powiększ">+</button></span>
            <span class="s-percent">190 %</span>
        </footer>

        <div class="taskbar">
            <button class="start" title="Start"><svg><use href="#i-windows"/></svg></button>
            <label class="search"><svg><use href="#i-search"/></svg><input type="text" placeholder="Wpisz tu wyszukiwane słowa" aria-label="Wyszukiwanie"></label>
            <div class="apps">
                <button class="small" title="Widok zadań"><svg><use href="#i-tasks"/></svg></button>
                <button class="open" title="Eksplorator plików"><svg><use href="#i-folder"/></svg></button>
                <button title="Microsoft Store"><svg><use href="#i-store"/></svg></button>
                <button title="Poczta"><svg><use href="#i-post"/></svg></button>
                <button title="Microsoft Edge"><svg><use href="#i-edge"/></svg></button>
                <button class="open" title="Bandicam"><svg><use href="#i-record"/></svg></button>
                <button title="Firefox"><svg><use href="#i-firefox"/></svg></button>
                <button class="open" title="Word"><svg><use href="#i-word"/></svg></button>
                <button class="open active" title="OpenOffice"><svg><use href="#i-office"/></svg></button>
            </div>
            <div class="tray">
                <button title="Pokaż ukryte ikony"><svg class="thin"><use href="#i-up"/></svg></button>
                <button title="Mikrofon"><svg><use href="#i-mic"/></svg></button>
                <button title="Sieć"><svg><use href="#i-wifi"/></svg></button>
                <button title="Głośność"><svg><use href="#i-sound"/></svg></button>
                <time>22:15<br>23.02.2021</time>
                <button class="message" title="Powiadomienia"><svg><use href="#i-message"/></svg><span class="badge">1</span></button>
            </div>
        </div>
    </div>
</body>
</html>
```

FILE: styles.css
```
* {
    box-sizing: border-box;
}
body {
    margin: 0;
    background: #000;
    color: #222;
    font-family: Lato, 'Open Sans', sans-serif;
    font-size: 11px;
    line-height: 16px;
}
button,
input,
select {
    font: inherit;
    color: inherit;
    margin: 0;
    padding: 0;
}
button {
    background: none;
    border: 0;
}
svg {
    display: block;
}
.sprite {
    position: absolute;
    width: 0;
    height: 0;
}
.desktop {
    display: flex;
    flex-direction: column;
    min-height: 100vh;
    margin: 0 5%;
    background: #fff;
}

/* Title and menu */
.titlebar {
    position: relative;
    display: flex;
    align-items: center;
    height: 21px;
    padding: 0 2px 0 4px;
}
.app-icon {
    width: 13px;
    height: 14px;
    margin-right: 4px;
}
.watermark {
    position: absolute;
    top: 3px;
    left: 0;
    right: 4px;
    text-align: center;
    font-family: 'DejaVu Sans', sans-serif;
    font-size: 19px;
    font-weight: bold;
    line-height: 24px;
    color: #fff;
    text-shadow: 0 0 2px #444, 0 0 2px #444, 1px 1px 2px #555, -1px -1px 2px #555, 1px 1px 3px #777;
}
.watermark small {
    font-size: 18px;
}
.window-buttons {
    display: flex;
    margin-left: auto;
}
.window-buttons button {
    width: 41px;
    padding: 0 15px;
}
.window-buttons svg {
    width: 10px;
    height: 10px;
}
.menubar {
    display: flex;
    align-items: center;
    gap: 10px;
    height: 21px;
    padding: 0 16px 0 5px;
    border-bottom: 1px solid #dcdcdc;
}
.menubar a {
    color: #222;
    text-decoration: none;
}
.menubar .update {
    margin-left: auto;
}

/* Toolbars */
.toolbar-row {
    display: flex;
    height: 28px;
}
.toolbar {
    display: flex;
    align-items: center;
    padding-right: 2px;
    border-right: 1px solid #bbb;
    border-bottom: 1px solid #ccc;
}
.format {
    border-bottom: 0;
}
.grip {
    width: 2px;
    height: 18px;
    margin: 0 5px 0 3px;
    background: repeating-linear-gradient(#999 0 1px, transparent 1px 3px);
}
.tool {
    position: relative;
    display: flex;
    flex: none;
    align-items: center;
    justify-content: center;
    width: 22px;
    height: 23px;
    color: #333;
}
.tool svg {
    width: 15px;
    height: 15px;
}
.tool.on {
    background: #cfe6f8;
    border: 1px solid #a9cfee;
}
.caret {
    flex: none;
    width: 11px;
    height: 20px;
}
.caret::before,
.more::before {
    content: "";
    display: block;
    width: 0;
    margin: 0 auto;
    border: solid transparent;
    border-width: 3px 3px 0;
    border-top-color: #000;
}
.caret:disabled::before {
    border-top-color: #aaa;
}
.sep {
    flex: none;
    width: 1px;
    height: 14px;
    margin: 0 3px 0 4px;
    background: #c4c4c4;
}
.format .sep {
    margin-right: 4px;
}
.more {
    width: 9px;
    height: 22px;
    margin-left: 6px;
    padding-top: 14px;
    background: linear-gradient(#eee, #888);
}
.mark {
    position: absolute;
    top: 3px;
    left: 0;
    right: 0;
    font-family: 'Liberation Sans', Arial, sans-serif;
    font-size: 7px;
    line-height: 8px;
    text-align: center;
    color: #2b3d4a;
}
.sort {
    left: 4px;
    text-align: left;
    color: #2c679b;
}
.num {
    top: 4px;
    left: 4px;
}
.num.less {
    left: 0;
    text-align: left;
}
.bold,
.under,
.percent,
.equals {
    font-family: 'Open Sans', sans-serif;
}
.bold {
    font-size: 14px;
    font-weight: 800;
}
.italic {
    font-family: 'Liberation Serif', serif;
    font-size: 17px;
    font-style: italic;
    font-weight: bold;
}
.under {
    font-size: 14px;
    text-decoration: underline;
}
.percent {
    font-size: 13px;
    font-weight: 600;
}
.text {
    font-family: 'Liberation Serif', serif;
    font-size: 18px;
    font-weight: bold;
    color: #315a7c;
}
.strike {
    font-size: 7px;
    font-weight: bold;
    text-decoration: line-through;
}

/* Drop-downs */
.combo {
    position: relative;
    display: block;
    height: 20px;
}
.combo select {
    width: 100%;
    height: 100%;
    padding-left: 3px;
    appearance: none;
    background: #fff;
    border: 1px solid #a8a8a8;
    border-radius: 0;
}
.combo::before {
    content: "";
    position: absolute;
    top: 1px;
    right: 1px;
    width: 15px;
    height: 18px;
    background: #e1e1e1;
    border: 1px solid #adadad;
    pointer-events: none;
}
.combo::after {
    content: "";
    position: absolute;
    top: 5px;
    right: 6px;
    width: 6px;
    height: 6px;
    border: solid #555;
    border-width: 0 1px 1px 0;
    transform: rotate(45deg);
    pointer-events: none;
}
.find {
    width: 90px;
}
.muted select {
    color: #777;
}
.boxed {
    padding-right: 1px;
}
.font {
    width: 154px;
    margin: 0 7px 0 8px;
}
.size {
    width: 62px;
    margin-right: 6px;
}

/* Document */
.workspace {
    display: flex;
    flex: 1;
    background: #f0f0f0;
    border-top: 1px solid #8c8c8c;
    border-bottom: 1px solid #a0a0a0;
}
.document {
    display: flex;
    flex: 1;
    flex-direction: column;
    min-width: 0;
}
.strip {
    height: 6px;
    border-bottom: 1px solid #a8a8a8;
}
.strip i {
    display: block;
    width: 32px;
    height: 2px;
    margin: 1px auto 0;
    background: repeating-linear-gradient(90deg, #888 0 2px, transparent 2px 4px);
}
.formula {
    display: flex;
    align-items: center;
    height: 30px;
    padding: 0 3px 0 5px;
}
.name {
    width: 113px;
    margin-right: 8px;
}
.formula input {
    flex: 1;
    height: 20px;
    margin-left: 8px;
    border: solid #888;
    border-width: 2px 0 0 2px;
    outline: 0;
}
.equals {
    font-size: 16px;
}
.sheet-area {
    display: flex;
    flex: 1;
}
.sheet-clip {
    position: relative;
    flex: 1;
    height: 485px;
    overflow: hidden;
    background: #fff;
    border-top: 1px solid #666;
    border-left: 1px solid #777;
}
.sheet {
    width: 100%;
    table-layout: fixed;
    border-collapse: separate;
    border-spacing: 0;
}
.c-head {
    width: 31px;
}
.c-a {
    width: 64px;
}
.c-wide {
    width: 140px;
}
.c-n {
    width: 139px;
}
.sheet th,
.sheet td {
    height: 29px;
    padding: 0;
    border: solid #c0c0c0;
    border-width: 0 1px 1px 0;
}
.sheet th {
    padding-bottom: 2px;
    font-weight: normal;
    line-height: 12px;
    color: #333;
    background: linear-gradient(90deg, #f6f6f6, #e9e9e9);
    border-color: #808080;
}
.sheet thead th {
    height: 16px;
    padding-bottom: 0;
    background: linear-gradient(#f8f8f8, #e9e9e9);
}
.sheet .big td {
    height: 67px;
    font: 55px/60px 'Liberation Sans', Arial, sans-serif;
    text-align: center;
    color: #000;
}
.sheet .mid td {
    height: 34px;
    font: 27px/30px 'Liberation Sans', Arial, sans-serif;
    text-align: center;
    color: #000;
}
.sheet thead .current {
    font-weight: bold;
    color: #fff;
    background: linear-gradient(#5ba6e4 50%, #0078d7 50%);
}
.sheet tbody .current {
    font-weight: bold;
    color: #fff;
    background: linear-gradient(90deg, #5ba6e4 50%, #0078d7 50%);
}
.selected {
    position: relative;
}
.selected::before {
    content: "";
    position: absolute;
    inset: -2px;
    border: 2px solid #000;
}
.selected::after {
    content: "";
    position: absolute;
    right: -3px;
    bottom: -4px;
    width: 5px;
    height: 5px;
    background: #000;
}
.pointer {
    position: absolute;
    top: 191px;
    left: 256px;
    width: 36px;
    height: 52px;
}

/* Scroll bars */
.scroll {
    display: flex;
    flex-direction: column;
    align-items: center;
    width: 15px;
    padding: 8px 0 4px;
    background: #f0f0f0;
}
.main-scroll {
    border-top: 2px solid #000;
}
.track {
    flex: 1;
    width: 100%;
    margin: 4px 0;
    padding: 0 1px;
}
.thumb {
    height: 47%;
    background: #cdcdcd;
}
.chev {
    flex: none;
    width: 6px;
    height: 6px;
    border: solid #444;
    border-width: 2px 0 0 2px;
}
.up {
    transform: rotate(45deg);
}
.down {
    transform: rotate(225deg);
}
.left {
    transform: rotate(-45deg);
}
.right {
    transform: rotate(135deg);
}

/* Sheet tabs */
.tabs {
    display: flex;
    height: 15px;
    background: #f0f0f0;
}
.tab-nav {
    display: flex;
    gap: 1px;
    padding: 0 2px;
}
.tab-nav button {
    width: 14px;
    height: 14px;
    font-size: 8px;
    line-height: 12px;
    color: #999;
    background: #d4d4d4;
    border: 1px solid #c4c4c4;
}
.tab-list {
    display: flex;
    width: 177px;
    padding-left: 2px;
    border-top: 1px solid #555;
}
.tab {
    position: relative;
    z-index: 0;
    width: 49px;
    height: 14px;
    line-height: 14px;
}
.tab::before {
    content: "";
    position: absolute;
    inset: 0;
    z-index: -1;
    border: solid #555;
    border-width: 0 1px 1px 0;
    transform: skewX(-25deg);
}
.tab.active {
    width: 51px;
    font-weight: bold;
    color: #000;
}
.tab.active::before {
    background: #fff;
}
.splitter {
    width: 6px;
    border: 1px solid #888;
}
.hscroll {
    display: flex;
    flex: 1;
    align-items: center;
    margin-right: 16px;
    padding: 0 8px 0 5px;
    border-right: 3px solid #000;
}
.htrack {
    flex: 1;
    height: 14px;
    margin: 0 6px 0 2px;
}
.hthumb {
    width: 43%;
    height: 100%;
    background: #cdcdcd;
}

/* Sidebar */
.divider {
    display: flex;
    align-items: center;
    width: 7px;
    border: solid #a0a0a0;
    border-width: 0 1px;
}
.divider i {
    width: 2px;
    height: 30px;
    margin-left: 1px;
    background: repeating-linear-gradient(#888 0 2px, transparent 2px 4px);
}
.sidebar {
    display: flex;
    width: 271px;
    padding: 4px 0 1px 3px;
    border-right: 1px solid #a0a0a0;
}
.panel {
    flex: 1;
}
.panel h2 {
    display: flex;
    align-items: center;
    justify-content: space-between;
    height: 23px;
    margin: 0;
    padding: 0 4px 0 10px;
    font-size: 11px;
}
.close svg {
    width: 8px;
    height: 8px;
}
.panel-body {
    display: flex;
}
.sections {
    flex: 1;
}
.sections h3 {
    display: flex;
    align-items: center;
    height: 26px;
    margin: 0;
    padding: 0 4px 0 6px;
    font-size: 11px;
    background: linear-gradient(#dedede, #f0f0f0);
}
.minus {
    width: 7px;
    height: 7px;
    margin-right: 5px;
    background: linear-gradient(#456, #456) center / 3px 1px no-repeat #fff;
    border: 1px solid #6e7f90;
}
.dialog {
    width: 10px;
    height: 9px;
    margin: 0 0 6px auto;
    background: #fff;
    border: 1px solid #6e93b8;
    border-top-width: 3px;
}
.section {
    padding: 1px 6px 0 7px;
}
.text-section {
    height: 96px;
}
.align-section {
    height: 156px;
}
.look-section {
    height: 152px;
}
.row {
    display: flex;
    justify-content: space-between;
    margin-bottom: 10px;
}
.text-section .row {
    padding-right: 2px;
}
.gap-small {
    justify-content: flex-start;
    gap: 14px;
}
.sfont {
    width: 145px;
}
.ssize {
    width: 50px;
}
.group {
    display: flex;
    align-items: center;
    height: 26px;
    padding: 0 1px;
    background: #f9f9f9;
    border: 1px solid #e2e2e2;
}
.push {
    margin-left: 10px;
}
.blue .tool {
    color: #3d5f84;
}
.align-section .row {
    margin-bottom: 8px;
    padding-right: 12px;
}
.two {
    display: flex;
    gap: 16px;
}
.indent {
    width: 92px;
    color: #777;
}
.spin {
    position: relative;
    display: block;
    margin-top: 3px;
}
.spin input {
    width: 100%;
    height: 20px;
    padding-left: 3px;
    color: #777;
    background: #fff;
    border: 1px solid #8f9fb0;
}
.spin::before,
.spin::after {
    content: "";
    position: absolute;
    right: 6px;
    border: solid transparent;
}
.spin::before {
    top: 5px;
    border-width: 0 3px 3px;
    border-bottom-color: #555;
}
.spin::after {
    bottom: 4px;
    border-width: 3px 3px 0;
    border-top-color: #555;
}
.checks label,
.angle label,
.gridlines {
    display: flex;
    align-items: center;
    gap: 3px;
}
.checks label {
    height: 23px;
}
input[type="checkbox"] {
    flex: none;
    width: 12px;
    height: 12px;
    appearance: none;
    background: #fff;
    border: 1px solid #333;
}
input[type="checkbox"]:checked::before {
    content: "";
    display: block;
    width: 4px;
    height: 7px;
    margin-left: 3px;
    border: solid #222;
    border-width: 0 1px 1px 0;
    transform: rotate(45deg);
}
.line {
    display: block;
}
.align-section .line {
    margin-bottom: 4px;
}
.direction {
    display: flex;
    gap: 22px;
}
.dial {
    width: 46px;
    height: 46px;
}
.angle {
    width: 133px;
    padding-top: 6px;
}
.angle label {
    margin-top: 10px;
}
.picker {
    justify-content: space-between;
    width: 88px;
    height: 24px;
}
.picker button:first-child {
    display: flex;
    flex: 1;
    align-items: center;
    gap: 2px;
    padding-left: 4px;
}
.picker svg {
    width: 14px;
    height: 14px;
}
.swatch {
    width: 50px;
    height: 11px;
    background: #eee;
    border: 3px double #bbb;
}
.swatch.dark {
    border-color: #456;
}
.rule {
    width: 66px;
    height: 1px;
    background: #bbb;
}
.borders-label {
    margin: 9px 0 2px;
}
.borders {
    display: flex;
    gap: 16px;
}
.border-box {
    width: 59px;
    height: 51px;
    padding: 0 0 0 5px;
}
.dots {
    display: block;
    width: 38px;
    height: 38px;
    border: 1px dotted #777;
    background: repeating-linear-gradient(#666 0 1px, transparent 1px 3px) 18px 0 / 1px 100% no-repeat,
        repeating-linear-gradient(90deg, #666 0 1px, transparent 1px 3px) 0 18px / 100% 1px no-repeat;
}
.stack {
    display: flex;
    flex-direction: column;
    gap: 6px;
}
.gridlines {
    margin-top: 7px;
}
.side {
    width: 14px;
    padding: 6px 0 5px;
}
.side .track {
    padding: 0;
}
.side .thumb {
    height: 75%;
}
.deck {
    display: flex;
    flex-direction: column;
    align-items: center;
    gap: 4px;
    width: 36px;
}
.deck button {
    display: flex;
    align-items: center;
    justify-content: center;
    width: 28px;
    height: 28px;
}
.deck .burger {
    margin-bottom: 1px;
    border-bottom: 1px solid #ddd;
}
.deck .on {
    border: 1px solid #b5b5b5;
    border-radius: 2px;
}
.deck svg {
    width: 22px;
    height: 22px;
}
.deck .burger svg {
    width: 16px;
    height: 16px;
}

/* Status bar */
.drawing .toolbar {
    border-bottom: 0;
}
.statusbar {
    display: flex;
    align-items: center;
    height: 20px;
    background: #f0f0f0;
    border-top: 1px solid #a0a0a0;
}
.statusbar > span {
    height: 15px;
    line-height: 15px;
    text-align: center;
    border-right: 1px solid #b0b0b0;
}
.statusbar .s-sheet {
    width: 238px;
    padding-left: 9px;
    text-align: left;
}
.statusbar .s-style {
    width: 231px;
    padding-left: 4px;
    text-align: left;
}
.s-empty {
    width: 48px;
}
.s-mode {
    width: 43px;
}
.s-mod {
    width: 16px;
}
.s-sign {
    width: 26px;
}
.s-sum {
    flex: 1;
}
.statusbar .s-zoom {
    display: flex;
    align-items: center;
    justify-content: center;
    gap: 4px;
    width: 138px;
}
.s-zoom button {
    width: 10px;
    height: 10px;
    font-size: 10px;
    line-height: 8px;
    color: #235;
    background: #d6e8f5;
    border: 1px solid #456b8a;
    border-radius: 50%;
}
.s-zoom input {
    width: 97px;
    height: 10px;
    appearance: none;
    background: linear-gradient(#888, #888) center / 100% 1px no-repeat, linear-gradient(#aaa, #aaa) center / 1px 10px no-repeat;
}
.s-zoom input::-webkit-slider-thumb {
    width: 8px;
    height: 8px;
    appearance: none;
    background: #5c87a6;
    border: 1px solid #345a76;
    border-radius: 50%;
}
.statusbar .s-percent {
    width: 40px;
    border: 0;
}

/* Taskbar */
.taskbar {
    display: flex;
    height: 36px;
    color: #fff;
    background: #2f3639;
}
.start {
    width: 44px;
    padding: 0 14px;
    background: #1d252c;
}
.start svg {
    width: 16px;
    height: 16px;
}
.search {
    display: flex;
    align-items: center;
    gap: 9px;
    width: 308px;
    margin: 1px 2px 1px 1px;
    padding-left: 9px;
    background: #f2f2f2;
}
.search svg {
    width: 16px;
    height: 16px;
}
.search input {
    flex: 1;
    font-family: 'Open Sans', sans-serif;
    font-size: 13px;
    background: none;
    border: 0;
}
.search input::placeholder {
    color: #444;
}
.apps {
    display: flex;
}
.apps button {
    display: flex;
    align-items: center;
    justify-content: center;
    width: 44px;
}
.apps svg {
    width: 22px;
    height: 22px;
}
.apps .small svg {
    width: 16px;
    height: 16px;
}
.apps .open {
    background: linear-gradient(#76a9dc, #76a9dc) bottom / 36px 2px no-repeat;
}
.apps .active {
    background: linear-gradient(#76a9dc, #76a9dc) bottom / 100% 2px no-repeat #555b5e;
}
.tray {
    display: flex;
    align-items: center;
    margin-left: auto;
    padding-right: 4px;
}
.tray button {
    position: relative;
    width: 22px;
}
.tray svg {
    width: 16px;
    height: 16px;
    margin: 0 auto;
}
.tray .thin {
    width: 12px;
}
.tray time {
    width: 52px;
    line-height: 16px;
    text-align: center;
}
.tray .message {
    width: 48px;
    height: 34px;
    border-right: 1px solid #555c5f;
}
.badge {
    position: absolute;
    right: 11px;
    bottom: 3px;
    width: 14px;
    height: 14px;
    font-size: 10px;
    line-height: 12px;
    background: #41484b;
    border: 1px solid #999;
    border-radius: 50%;
}
```
